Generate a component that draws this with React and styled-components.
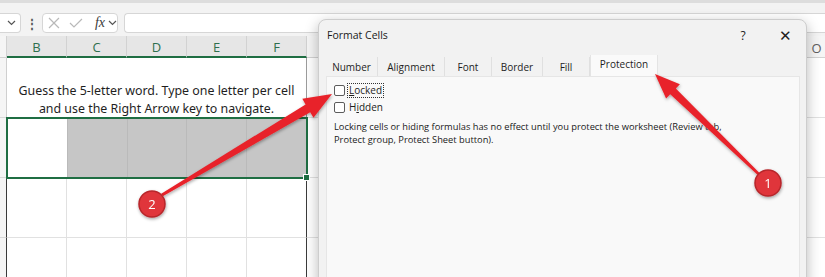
import React from "react";
import styled, { createGlobalStyle } from "styled-components";

const GlobalStyle = createGlobalStyle`
  html, body {
    margin: 0;
    padding: 0;
    background: #ffffff;
  }
  body {
    font-family: "Open Sans", "Liberation Sans", sans-serif;
  }
`;

const Screen = styled.div`
  position: relative;
  width: 825px;
  height: 277px;
  overflow: hidden;
  background: #ffffff;
`;

/* ---------- formula bar ---------- */

const FormulaBar = styled.div`
  height: 36px;
  box-sizing: border-box;
  border-top: 3px solid #dddddd;
  background: #f3f3f3;
  display: flex;
  align-items: flex-start;
  padding-top: 10px;
`;

const Box = styled.div`
  height: 20px;
  box-sizing: border-box;
  background: #ffffff;
  border: 1px solid #d6d6d6;
  border-radius: 4px;
  display: flex;
  align-items: center;
`;

const NameBox = styled(Box)`
  width: 21px;
  border-left: 0;
  border-radius: 0 4px 4px 0;
  justify-content: flex-end;
  padding-right: 4px;
`;

const Dots = styled.div`
  width: 21px;
  height: 20px;
  display: flex;
  align-items: center;
  justify-content: center;
  color: #555;
  font-size: 12px;
  font-weight: 700;
`;

const FxBox = styled(Box)`
  width: 76px;
  padding-left: 5px;
  gap: 9px;
`;

const FxText = styled.span`
  font-family: "Liberation Serif", serif;
  font-style: italic;
  font-size: 14px;
  color: #3a3a3a;
  margin-left: 3px;
  margin-right: -6px;
`;

const InputBox = styled(Box)`
  flex: 1;
  margin-left: 6px;
  border-radius: 4px 0 0 4px;
  border-right: 0;
`;

/* ---------- sheet ---------- */

const Sheet = styled.div`
  display: grid;
  grid-template-columns: 7px repeat(14, 60px);
  grid-template-rows: 22px 60px 60px 60px 60px;
`;

const HeaderCell = styled.div`
  box-sizing: border-box;
  background: ${(p) => (p.$selected ? "#e6e6e6" : "#f5f5f5")};
  border-right: 1px solid #d2d2d2;
  border-bottom: ${(p) => (p.$selected ? "2px solid #1f6e43" : "1px solid #d2d2d2")};
  color: ${(p) => (p.$selected ? "#2e6f4e" : "#606060")};
  font-size: 13px;
  padding-top: 2px;
  display: flex;
  align-items: center;
  justify-content: center;
`;

const RowHeader = styled.div`
  box-sizing: border-box;
  background: #f5f5f5;
  border-right: 1px solid ${(p) => (p.$dark ? "#3a3a3a" : "#cfcfcf")};
  border-bottom: 1px solid #d8d8d8;
`;

const Cell = styled.div`
  box-sizing: border-box;
  background: #ffffff;
  border-right: 1px solid ${(p) => (p.$edge ? "#3a3a3a" : "#e1e1e1")};
  border-bottom: 1px solid #e1e1e1;
`;

const MessageCell = styled.div`
  grid-column: span 5;
  box-sizing: border-box;
  border-right: 1px solid #9c9c9c;
  display: flex;
  align-items: flex-end;
  justify-content: center;
  text-align: center;
  padding-bottom: 0;
  font-family: "Noto Sans", "Liberation Sans", sans-serif;
  font-size: 12.4px;
  line-height: 18px;
  color: #1f1f1f;
`;

const Selection = styled.div`
  grid-column: span 5;
  position: relative;
  z-index: 1;
  margin: -1px;
  box-sizing: border-box;
  border: 2px solid #1f6e43;
  display: flex;
`;

const SelCell = styled.div`
  flex: 1;
  background: ${(p) => (p.$active ? "#ffffff" : "#c6c6c6")};
  border-right: ${(p) => (p.$last ? "0" : "1px solid #bababa")};
`;

const FillHandle = styled.div`
  position: absolute;
  right: -4px;
  bottom: -4px;
  width: 5px;
  height: 5px;
  background: #1f6e43;
  border: 1px solid #ffffff;
`;

/* ---------- dialog ---------- */

const Dialog = styled.div`
  position: absolute;
  left: 318px;
  top: 19px;
  width: 489px;
  height: 300px;
  box-sizing: border-box;
  background: #f2f2f2;
  border: 1px solid #cdcdcd;
  border-radius: 8px;
  box-shadow: 0 4px 14px rgba(0, 0, 0, 0.28);
  display: flex;
  flex-direction: column;
  z-index: 2;
`;

const TitleBar = styled.div`
  height: 30px;
  display: flex;
  align-items: center;
  padding-left: 8px;
  font-size: 10.5px;
  color: #1a1a1a;
`;

const TitleText = styled.span`
  flex: 1;
`;

const TitleButton = styled.span`
  width: 42px;
  text-align: center;
  font-size: ${(p) => p.$size || "12px"};
  color: #222;
`;

const TabStrip = styled.div`
  display: flex;
  margin: 7px 6px 0 7px;
  height: 19px;
  align-items: flex-end;
`;

const Tab = styled.div`
  width: ${(p) => p.$w}px;
  box-sizing: border-box;
  height: ${(p) => (p.$active ? "21px" : "19px")};
  display: flex;
  align-items: center;
  justify-content: center;
  font-size: 10px;
  color: #1e1e1e;
  background: ${(p) => (p.$active ? "#fafafa" : "transparent")};
  border-right: 1px solid ${(p) => (p.$active ? "#e4e4e4" : "#e0e0e0")};
  border-left: ${(p) => (p.$active ? "1px solid #e4e4e4" : "0")};
  padding-bottom: ${(p) => (p.$active ? "3px" : "0")};
`;

const Panel = styled.div`
  flex: 1;
  margin: 0 6px 0 7px;
  background: #f9f9f9;
  border: 1px solid #e6e6e6;
  padding: 5px 7px 0 7px;
`;

const CheckRow = styled.div`
  height: 17px;
  display: flex;
  align-items: center;
  font-size: 10px;
  color: #1e1e1e;
`;

const CheckBox = styled.span`
  width: 11px;
  height: 11px;
  box-sizing: border-box;
  border: 1px solid #5c5c5c;
  border-radius: 2px;
  background: #ffffff;
  margin-right: 2px;
`;

const CheckLabel = styled.span`
  padding: 0 1px;
  line-height: 13px;
  border: 1px ${(p) => (p.$focused ? "dotted #333" : "solid transparent")};
`;

const Note = styled.p`
  margin: 4px 0 0 0;
  font-size: 9.3px;
  line-height: 13px;
  color: #1a1a1a;
`;

/* ---------- annotations ---------- */

const Overlay = styled.svg`
  position: absolute;
  left: 0;
  top: 0;
  z-index: 3;
  pointer-events: none;
`;

const Chevron = () => (
  <svg width="9" height="6" viewBox="0 0 9 6">
    <path d="M1 1 L4.5 4.5 L8 1" fill="none" stroke="#555" strokeWidth="1.2" />
  </svg>
);

const columns = ["B", "C", "D", "E", "F", "G", "H", "I", "J", "K", "L", "M", "N", "O"];
const tail = columns.slice(5);
// the dialog hides the headers of G..N, so only B..F and O carry a letter
const visibleHeader = (c) => ["B", "C", "D", "E", "F", "O"].includes(c);

const tabs = [
  { label: "Number", w: 52 },
  { label: "Alignment", w: 67 },
  { label: "Font", w: 47 },
  { label: "Border", w: 51 },
  { label: "Fill", w: 47 },
  { label: "Protection", w: 68, active: true },
];

const Marker = ({ cx, cy, n }) => (
  <g filter="url(#shadow)">
    <circle cx={cx} cy={cy} r="13" fill="#e0363b" stroke="#b8262b" strokeWidth="1.5" />
    <text
      x={cx}
      y={cy + 4.5}
      textAnchor="middle"
      fontFamily="Open Sans, sans-serif"
      fontSize="13"
      fill="#ffffff"
    >
      {n}
    </text>
  </g>
);

export default function App() {
  return (
    <Screen>
      <GlobalStyle />
      <FormulaBar>
        <NameBox>
          <Chevron />
        </NameBox>
        <Dots>⋮</Dots>
        <FxBox>
          <svg width="12" height="12" viewBox="0 0 12 12">
            <path d="M1 1 L11 11 M11 1 L1 11" stroke="#b9b9b9" strokeWidth="1.2" />
          </svg>
          <svg width="14" height="12" viewBox="0 0 14 12">
            <path d="M1 6 L5 10 L13 2" fill="none" stroke="#b9b9b9" strokeWidth="1.2" />
          </svg>
          <FxText>fx</FxText>
          <Chevron />
        </FxBox>
        <InputBox />
      </FormulaBar>

      <Sheet>
        <HeaderCell />
        {columns.map((c, i) => (
          <HeaderCell key={c} $selected={i < 5}>
            {visibleHeader(c) ? c : null}
          </HeaderCell>
        ))}

        <RowHeader />
        <MessageCell>
          Guess the 5-letter word. Type one letter per cell
          <br />
          and use the Right Arrow key to navigate.
        </MessageCell>
        {tail.map((c) => (
          <Cell key={"r1" + c} />
        ))}

        <RowHeader $dark />
        <Selection>
          {[0, 1, 2, 3, 4].map((i) => (
            <SelCell key={i} $active={i === 0} $last={i === 4} />
          ))}
          <FillHandle />
        </Selection>
        {tail.map((c) => (
          <Cell key={"r2" + c} />
        ))}

        {[3, 4].map((r) => (
          <React.Fragment key={r}>
            <RowHeader $dark />
            {columns.map((c, i) => (
              <Cell key={r + c} $edge={i === 4} />
            ))}
          </React.Fragment>
        ))}
      </Sheet>

      <Dialog>
        <TitleBar>
          <TitleText>Format Cells</TitleText>
          <TitleButton>?</TitleButton>
          <TitleButton $size="15px">✕</TitleButton>
        </TitleBar>
        <TabStrip>
          {tabs.map((t) => (
            <Tab key={t.label} $w={t.w} $active={t.active}>
              {t.label}
            </Tab>
          ))}
        </TabStrip>
        <Panel>
          <CheckRow>
            <CheckBox />
            <CheckLabel $focused>
              <u>L</u>ocked
            </CheckLabel>
          </CheckRow>
          <CheckRow>
            <CheckBox />
            <CheckLabel>
              H<u>i</u>dden
            </CheckLabel>
          </CheckRow>
          <Note>
            Locking cells or hiding formulas has no effect until you protect the worksheet (Review tab,
            <br />
            Protect group, Protect Sheet button).
          </Note>
        </Panel>
      </Dialog>

      <Overlay width="825" height="277" viewBox="0 0 825 277">
        <defs>
          <filter id="shadow" x="-30%" y="-30%" width="160%" height="160%">
            <feDropShadow dx="0.5" dy="1.5" stdDeviation="1.5" floodColor="#000" floodOpacity="0.35" />
          </filter>
        </defs>
        <g filter="url(#shadow)" fill="#e8232a">
          <polygon points="162.8,196.3 310.2,112.2 313.5,117.8 332,94 302.3,98.8 305.6,104.4 161.2,193.7" />
          <polygon points="759.5,173.1 675.8,88.5 679.9,84.2 655,74 666.1,98.6 670.2,94.2 757.7,174.9" />
        </g>
        <Marker cx={152} cy={204} n="2" />
        <Marker cx={768} cy={183} n="1" />
      </Overlay>
    </Screen>
  );
}
